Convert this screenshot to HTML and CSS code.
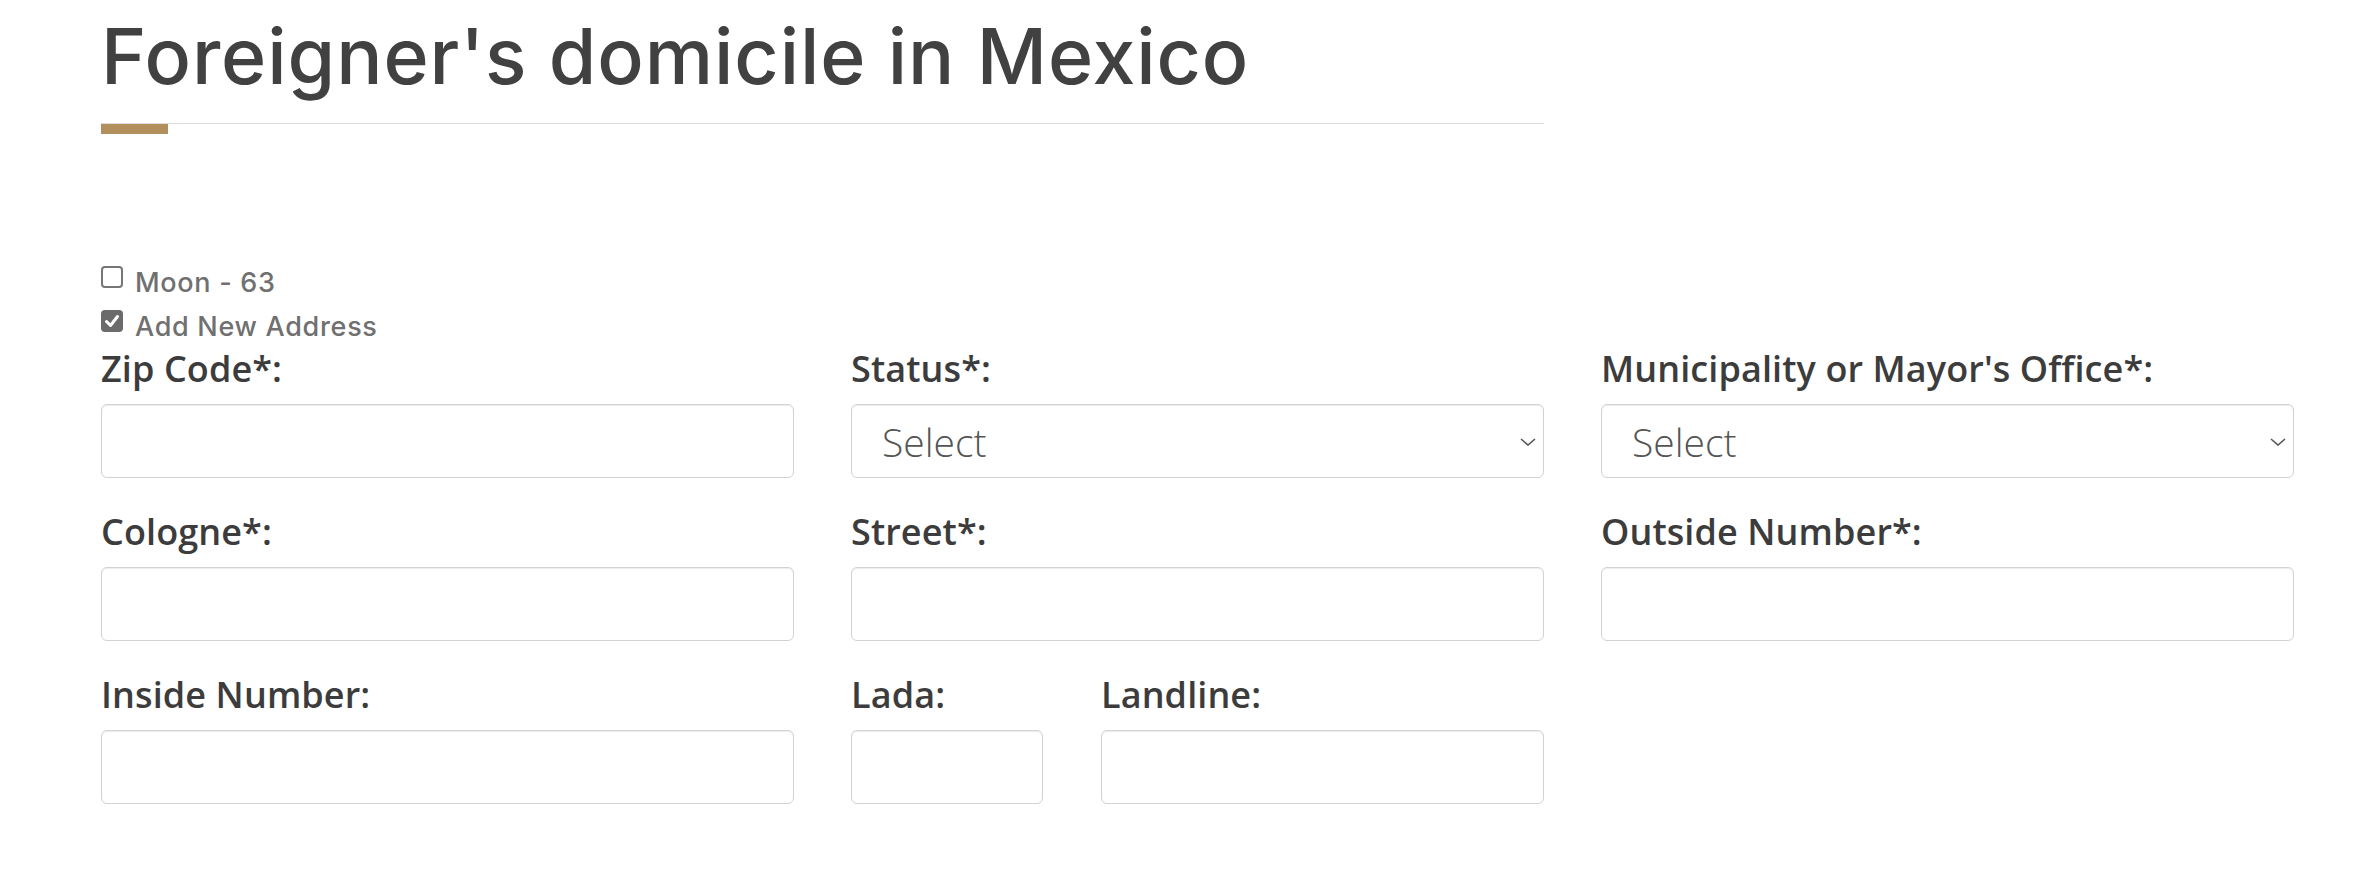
FILE: index.html
```html
<!DOCTYPE html>
<html lang="en">
<head>
<meta charset="utf-8">
<title>Foreigner's domicile in Mexico</title>
<link rel="stylesheet" href="styles.css">
</head>
<body>
<div class="page">
  <header class="section-head">
    <h1 class="title">Foreigner's domicile in Mexico</h1>
    <div class="rule"><span class="accent"></span></div>
  </header>

  <div class="addresses">
    <label class="check"><span class="box"></span><span class="check-text">Moon - 63</span></label>
    <label class="check"><span class="box checked"><svg viewBox="0 0 22 22" width="22" height="22"><polyline points="5.5,11.5 9.5,15.5 16.5,6.5" fill="none" stroke="#fff" stroke-width="3" stroke-linecap="round" stroke-linejoin="round"/></svg></span><span class="check-text">Add New Address</span></label>
  </div>

  <div class="form-grid">
    <div class="field">
      <label class="field-label">Zip Code*:</label>
      <div class="control"></div>
    </div>
    <div class="field">
      <label class="field-label">Status*:</label>
      <div class="control select"><span class="select-text">Select</span><svg class="chev" viewBox="0 0 16 8" width="16" height="8"><polyline points="1,1 8,7 15,1" fill="none" stroke="#555" stroke-width="1.6"/></svg></div>
    </div>
    <div class="field">
      <label class="field-label">Municipality or Mayor's Office*:</label>
      <div class="control select"><span class="select-text">Select</span><svg class="chev" viewBox="0 0 16 8" width="16" height="8"><polyline points="1,1 8,7 15,1" fill="none" stroke="#555" stroke-width="1.6"/></svg></div>
    </div>

    <div class="field">
      <label class="field-label">Cologne*:</label>
      <div class="control"></div>
    </div>
    <div class="field">
      <label class="field-label">Street*:</label>
      <div class="control"></div>
    </div>
    <div class="field">
      <label class="field-label">Outside Number*:</label>
      <div class="control"></div>
    </div>

    <div class="field">
      <label class="field-label">Inside Number:</label>
      <div class="control"></div>
    </div>
    <div class="phone">
      <div class="field">
        <label class="field-label">Lada:</label>
        <div class="control"></div>
      </div>
      <div class="field">
        <label class="field-label">Landline:</label>
        <div class="control"></div>
      </div>
    </div>
  </div>
</div>
</body>
</html>
```

FILE: styles.css
```css
html, body {
  margin: 0;
  padding: 0;
  background: #ffffff;
}

.page {
  width: 2195px;
  padding: 0 0 0 101px;
  font-family: "Open Sans", "Noto Sans", sans-serif;
}

.section-head {
  width: 1443px;
  padding-top: 10px;
}

.title {
  margin: 0;
  font-family: Inter, "Noto Sans", sans-serif;
  font-weight: 500;
  font-size: 77px;
  line-height: 92px;
  color: #414141;
  letter-spacing: 0.9px;
}

.rule {
  margin-top: 21px;
  border-top: 1px solid #dddddd;
}

.accent {
  display: block;
  width: 67px;
  height: 10px;
  background: #b28e5c;
}

.addresses {
  margin-top: 132px;
  display: flex;
  flex-direction: column;
  gap: 22px;
}

.check {
  display: flex;
  align-items: flex-start;
  height: 22px;
  gap: 12px;
  font-family: Inter, "Noto Sans", sans-serif;
  font-weight: 500;
  font-size: 27px;
  line-height: 32px;
  color: #707070;
  letter-spacing: 0.7px;
}

.check-text {
  margin-top: 1px;
}

.box {
  width: 22px;
  height: 22px;
  box-sizing: border-box;
  border: 2px solid #767676;
  border-radius: 4px;
  background: #ffffff;
  flex: none;
}

.box.checked {
  border: none;
  background: #6b6b6b;
}

.box svg {
  display: block;
}

.form-grid {
  margin-top: 13px;
  display: grid;
  grid-template-columns: 693px 693px 693px;
  column-gap: 57px;
  row-gap: 30px;
}

.field {
  display: flex;
  flex-direction: column;
}

.field-label {
  display: block;
  font-family: "Open Sans", "Noto Sans", sans-serif;
  font-weight: 600;
  font-size: 36px;
  line-height: 42px;
  letter-spacing: 0.1px;
  color: #3c3c3c;
  margin: 3px 0 14px;
}

.control {
  box-sizing: border-box;
  height: 74px;
  border: 1px solid #d2d2d2;
  border-radius: 6px;
  background: #ffffff;
  box-shadow: inset 0 1px 1px rgba(0, 0, 0, 0.075);
}

.select {
  display: flex;
  align-items: center;
  justify-content: space-between;
  padding: 0 7px 0 30px;
}

.select-text {
  font-family: "Open Sans", "Noto Sans", sans-serif;
  font-weight: 300;
  font-size: 39px;
  color: #555555;
}

.chev {
  display: block;
  margin-top: 2px;
}

.phone {
  display: grid;
  grid-template-columns: 192px 1fr;
  column-gap: 58px;
}
```
